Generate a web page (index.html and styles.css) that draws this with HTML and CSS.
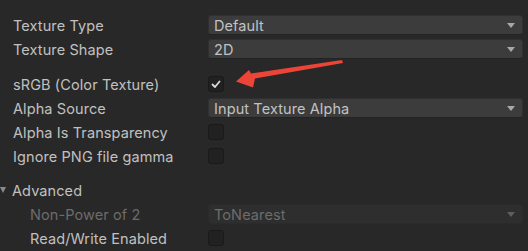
FILE: index.html
```html
<!DOCTYPE html>
<html lang="en">
<head>
    <meta charset="UTF-8">
    <title>Texture Import Settings</title>
    <link rel="stylesheet" href="styles.css">
</head>
<body>
    <div class="inspector">
        <div class="row">
            <span class="label">Texture Type</span>
            <div class="popup"><span>Default</span><i class="arrow"></i></div>
        </div>
        <div class="row">
            <span class="label">Texture Shape</span>
            <div class="popup"><span>2D</span><i class="arrow"></i></div>
        </div>

        <div class="row section">
            <span class="label">sRGB (Color Texture)</span>
            <div class="toggle checked">
                <svg width="16" height="16" viewBox="0 0 16 16"><polyline points="4.5,8.5 7,11 11.5,5.5" fill="none" stroke="#d8d8d8" stroke-width="1.8" stroke-linecap="round" stroke-linejoin="round"/></svg>
            </div>
        </div>
        <div class="row">
            <span class="label">Alpha Source</span>
            <div class="popup"><span>Input Texture Alpha</span><i class="arrow"></i></div>
        </div>
        <div class="row">
            <span class="label">Alpha Is Transparency</span>
            <div class="toggle"></div>
        </div>
        <div class="row">
            <span class="label">Ignore PNG file gamma</span>
            <div class="toggle"></div>
        </div>

        <div class="row foldout">
            <i class="fold"></i>
            <span class="label">Advanced</span>
        </div>
        <div class="row nested">
            <span class="label dim">Non-Power of 2</span>
            <div class="popup disabled"><span>ToNearest</span><i class="arrow"></i></div>
        </div>
        <div class="row nested">
            <span class="label">Read/Write Enabled</span>
            <div class="toggle"></div>
        </div>

        <svg class="callout" width="528" height="251" viewBox="0 0 528 251">
            <polygon points="342,60 343,63 255,78.5 253,87.5 236,81.5 249,70 251,73.5" fill="#ec4437"/>
        </svg>
    </div>
</body>
</html>
```

FILE: styles.css
```css
body, html {
    margin: 0;
    padding: 0;
    background: #282828;
    font-family: Inter, "Noto Sans", sans-serif;
    font-size: 14.5px;
    letter-spacing: 0.1px;
    color: #c0c0c0;
}
.inspector {
    position: relative;
    width: 528px;
    height: 251px;
    padding: 15px 5px 0 13px;
    box-sizing: border-box;
    overflow: hidden;
}
.row {
    display: flex;
    align-items: center;
    height: 20px;
    margin-bottom: 4px;
}
.row.section {
    margin-top: 15px;
}
.row.foldout {
    margin-top: 14px;
    margin-left: -13px;
}
.row.nested {
    padding-left: 17px;
}
.label {
    width: 195px;
    flex-shrink: 0;
    white-space: nowrap;
}
.nested .label {
    width: 178px;
}
.label.dim {
    color: #6c6c6c;
}
.popup {
    flex: 1;
    height: 20px;
    box-sizing: border-box;
    display: flex;
    align-items: center;
    justify-content: space-between;
    padding: 0 7px 0 5px;
    background: #3c3c3c;
    border: 1px solid #303030;
    border-bottom-color: #232323;
    border-radius: 3px;
    color: #c2c2c2;
}
.popup.disabled {
    background: #2e2e2e;
    border-color: #2b2b2b;
    color: #6c6c6c;
}
.arrow {
    width: 0;
    height: 0;
    border-left: 4.5px solid transparent;
    border-right: 4.5px solid transparent;
    border-top: 5px solid #a8a8a8;
}
.disabled .arrow {
    border-top-color: #5e5e5e;
}
.toggle {
    width: 16px;
    height: 16px;
    box-sizing: border-box;
    background: #212121;
    border: 1px solid #1a1a1a;
    border-radius: 3px;
    display: flex;
    align-items: center;
    justify-content: center;
}
.toggle svg {
    display: block;
    margin: -1px;
}
.fold {
    width: 0;
    height: 0;
    margin: 0 6px 0 0;
    border-left: 3.5px solid transparent;
    border-right: 3.5px solid transparent;
    border-top: 6px solid #8a8a8a;
}
.callout {
    position: absolute;
    left: 0;
    top: 0;
    pointer-events: none;
}
```
